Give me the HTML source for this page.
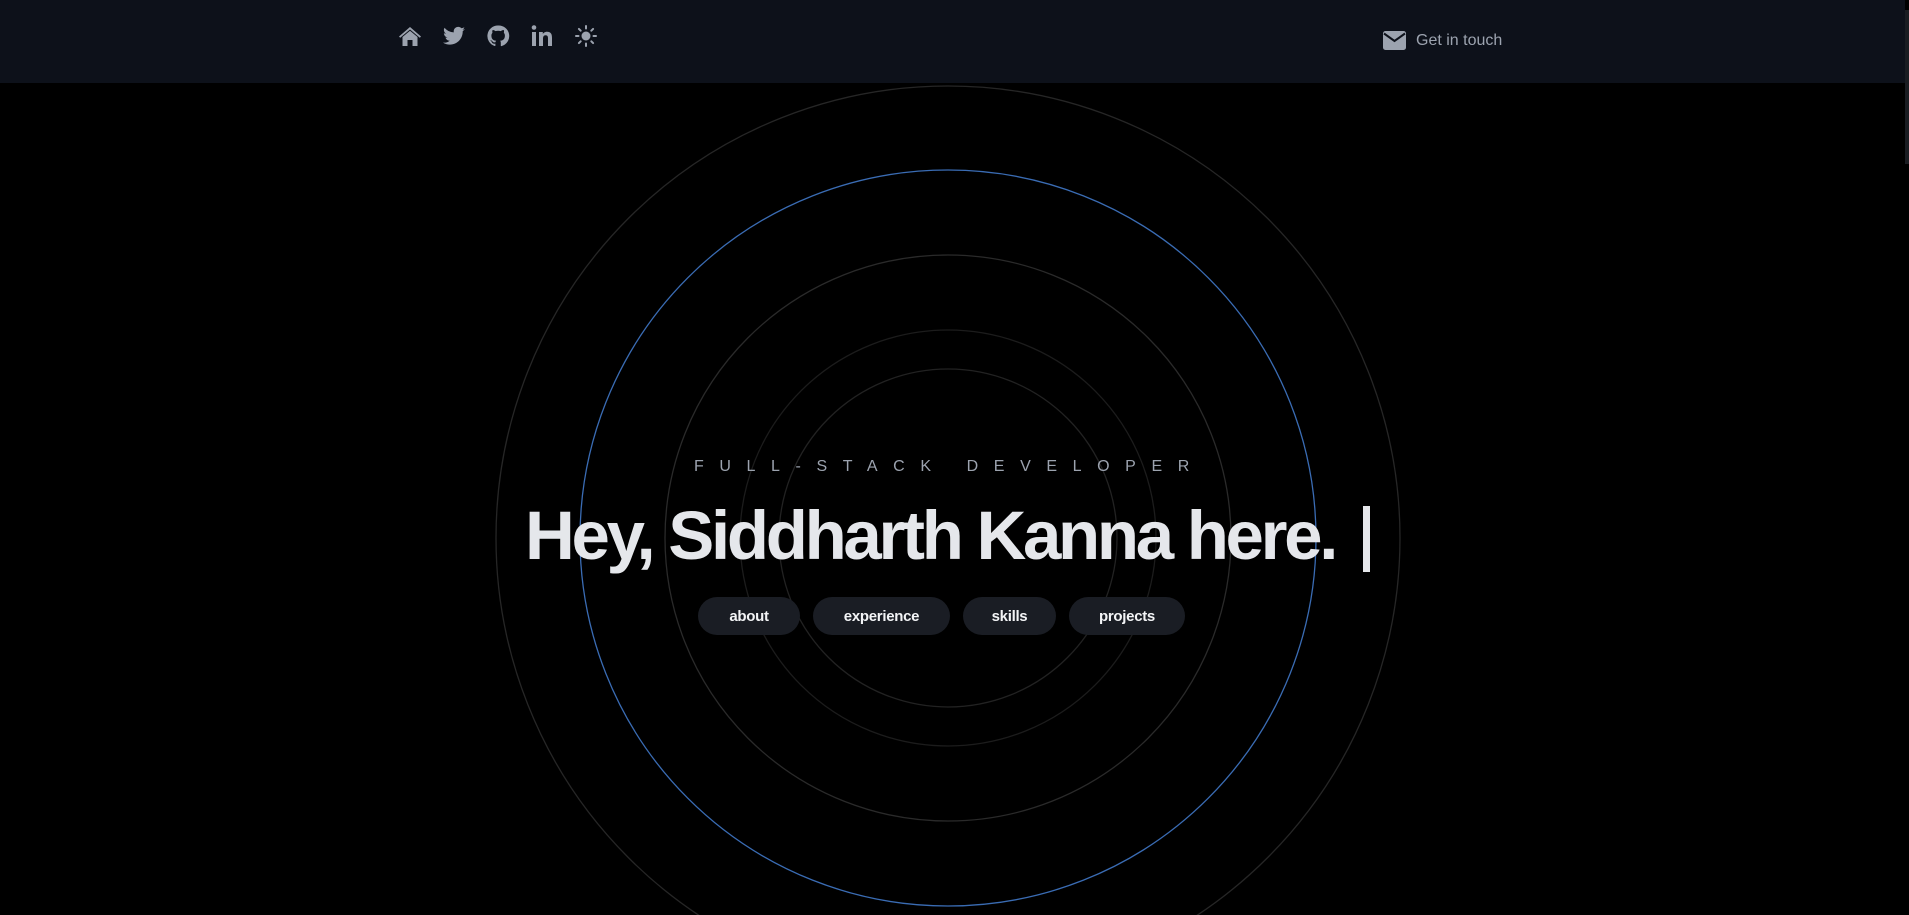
<!DOCTYPE html>
<html><head><meta charset="utf-8"><style>
html,body{margin:0;padding:0;width:1909px;height:915px;overflow:hidden;background:#000;font-family:"Liberation Sans",sans-serif}
.hdr{position:absolute;left:0;top:0;width:1905px;height:83px;background:#0d111a}
.ic{position:absolute;top:24px;width:24px;height:24px;fill:#9ca3af}
.git{position:absolute;left:1383px;top:31px;display:flex;align-items:center;color:#9ca3af;font-size:16px}
.sb{position:absolute;left:1905px;top:10px;width:4px;height:154px;background:#1a1d22}
svg.c{position:absolute;left:0;top:0}
.sub{position:absolute;top:458px;left:694px;color:#9ca3af;font-size:16px;letter-spacing:15.6px;white-space:nowrap}
.h{position:absolute;left:525px;top:494px;color:#e5e7eb;font-weight:bold;font-size:69px;letter-spacing:-3.3px;white-space:nowrap;line-height:84px}
.cur{position:absolute;left:1363px;top:506px;width:7px;height:66px;background:#e5e7eb}
.b{position:absolute;top:597px;height:38px;border-radius:19px;background:#1a1d24;color:#f3f4f6;font-weight:bold;font-size:15px;display:flex;align-items:center;justify-content:center;letter-spacing:-0.3px}
</style></head><body>
<svg class="c" width="1909" height="915">
<g fill="none" stroke-width="1.3">
<circle cx="948" cy="538" r="452" stroke="#262626"/>
<circle cx="948" cy="538" r="368" stroke="#3a6cb4"/>
<circle cx="948" cy="538" r="283" stroke="#2a2a2a"/>
<circle cx="948" cy="538" r="208" stroke="#1c1c1c"/>
<circle cx="948" cy="538" r="169" stroke="#222"/>
</g></svg>
<div class="hdr"></div>
<svg class="ic" style="left:398px" viewBox="0 0 24 24"><path d="M12 3 1 12.5l1.2 1.3L12 5.5l9.8 8.3 1.2-1.3z M4.5 13V22h5v-6h5v6h5v-9L12 6.8z"/></svg>
<svg class="ic" style="left:442px" viewBox="0 0 24 24"><path d="M23 5c-.8.4-1.7.6-2.6.7.9-.6 1.6-1.4 2-2.5-.9.5-1.9.9-2.9 1.1A4.5 4.5 0 0 0 11.8 8.4 12.8 12.8 0 0 1 2.5 3.7a4.5 4.5 0 0 0 1.4 6c-.7 0-1.4-.2-2-.6 0 2.2 1.6 4 3.6 4.4-.7.2-1.4.2-2 .1.6 1.8 2.200 3.1 4.2 3.1A9 9 0 0 1 1 18.6 12.8 12.8 0 0 0 7.9 20.6c8.3 0 12.8-6.9 12.8-12.8v-.6c.9-.6 1.6-1.4 2.300-2.2z"/></svg>
<svg class="ic" style="left:486px" viewBox="0 0 24 24"><path d="M12 1.5A10.5 10.5 0 0 0 8.7 22c.5.1.7-.2.7-.5v-1.9c-2.9.6-3.5-1.3-3.5-1.3-.5-1.2-1.2-1.5-1.2-1.5-.9-.6.1-.6.1-.6 1 .1 1.6 1.1 1.6 1.1.9 1.6 2.5 1.1 3.1.9.1-.7.4-1.1.7-1.4-2.3-.3-4.8-1.2-4.8-5.2 0-1.1.4-2.1 1.1-2.8-.1-.3-.5-1.3.1-2.8 0 0 .9-.3 2.9 1.1a10 10 0 0 1 5.3 0c2-1.4 2.9-1.1 2.9-1.1.6 1.5.2 2.5.1 2.8.7.7 1.1 1.7 1.1 2.8 0 4-2.5 4.9-4.8 5.2.4.3.7 1 .7 1.9v2.9c0 .3.2.6.7.5A10.5 10.5 0 0 0 12 1.5z"/></svg>
<svg class="ic" style="left:530px" viewBox="0 0 24 24"><circle cx="4" cy="3.5" r="2.3"/><rect x="2" y="8" width="4" height="14"/><path d="M9 8h3.8v2c.6-1.1 2-2.3 4.2-2.3 4.3 0 5 2.8 5 6.4V22h-4v-7c0-1.7 0-3.8-2.3-3.8S13 13 13 14.9V22H9z"/></svg>
<svg class="ic" style="left:574px" viewBox="0 0 24 24"><circle cx="12" cy="12" r="4.5"/><g stroke="#9ca3af" stroke-width="2" stroke-linecap="round"><path d="M12 2v2.5M12 19.5V22M2 12h2.5M19.5 12H22M4.9 4.9l1.8 1.8M17.3 17.3l1.8 1.8M4.9 19.1l1.8-1.8M17.3 6.7l1.8-1.8"/></g></svg>
<div class="git"><svg width="23" height="19" viewBox="0 0 23 19" style="margin-right:10px"><rect x="0" y="0" width="23" height="19" rx="2.5" fill="#9ca3af"/><path d="M1 2.5 11.5 10 22 2.5" fill="none" stroke="#0d111a" stroke-width="2"/></svg>Get in touch</div>
<div class="sb"></div>
<div class="sub">FULL-STACK DEVELOPER</div>
<div class="h">Hey, Siddharth Kanna here.</div>
<div class="cur"></div>
<div class="b" style="left:698px;width:102px">about</div>
<div class="b" style="left:813px;width:137px">experience</div>
<div class="b" style="left:963px;width:93px">skills</div>
<div class="b" style="left:1069px;width:116px">projects</div>
</body></html>
